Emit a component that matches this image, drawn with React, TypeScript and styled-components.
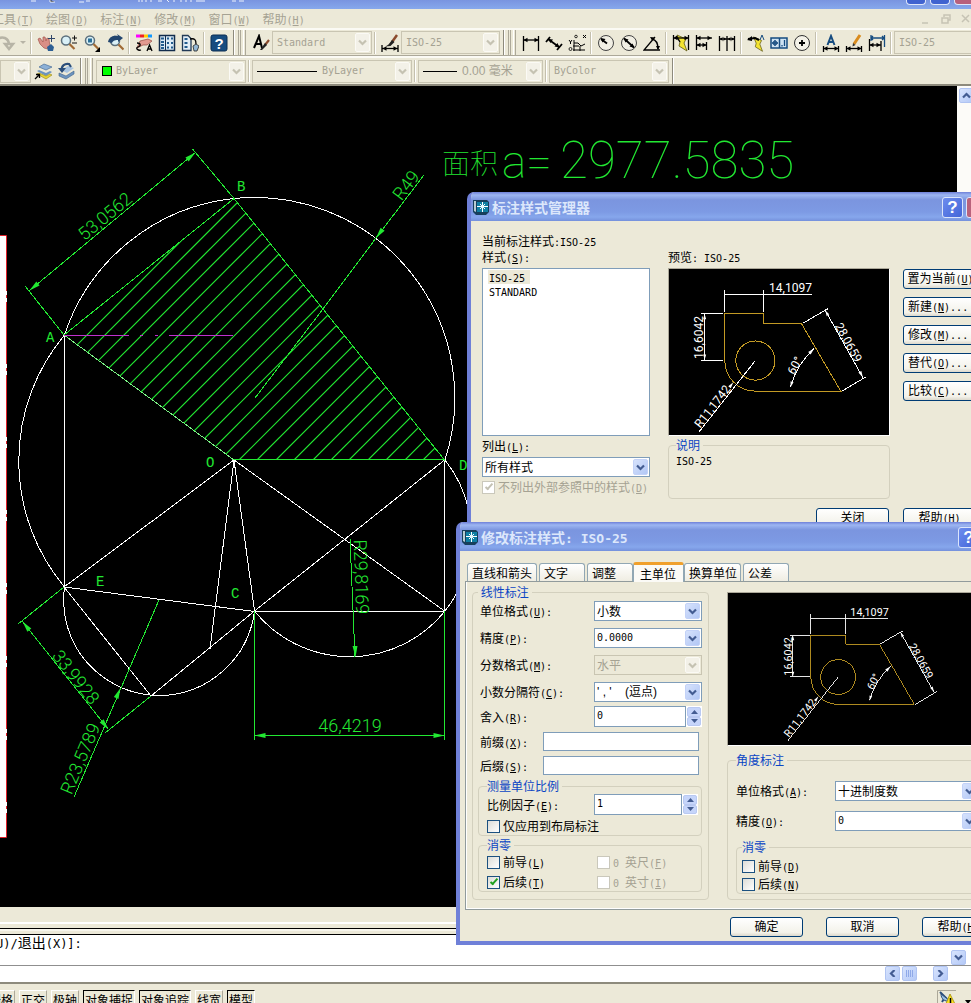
import React from "react";
import styled, { createGlobalStyle, css } from "styled-components";

const FACE = "#ece9d8";
const CJK = '"Noto Sans CJK SC", sans-serif';
const MONO = '"DejaVu Sans Mono", "Noto Sans CJK SC", monospace';
const GREEN = "#22e832";

const Global = createGlobalStyle`
  *, *::before, *::after { box-sizing: border-box; }
  body { margin: 0; overflow: hidden; background: ${FACE}; }
  button, input, select { font: inherit; color: inherit; margin: 0; padding: 0; border-radius: 0; }
`;

const Desktop = styled.div`
  position: relative;
  display: flex;
  flex-direction: column;
  height: 100vh;
  overflow: hidden;
  background: ${FACE};
  color: #000;
  font: 12px/14px ${CJK};
`;

/* ---------- mixed Chinese / half-width text ---------- */

const Half = styled.span<{ $size: number }>`
  font-family: ${MONO};
  font-size: ${(p) => p.$size}px;
  line-height: 1px;
  white-space: pre;
`;

function Txt({ text, size = 10 }: { text: string; size?: number }) {
  return (
    <>
      {text.split(/([ -~]+)/).map((part, i) => {
        if (i % 2 === 0) return part;
        const k = part.indexOf("&");
        return (
          <Half key={i} $size={size}>
            {k < 0 ? part : (
              <>
                {part.slice(0, k)}
                <u>{part[k + 1]}</u>
                {part.slice(k + 2)}
              </>
            )}
          </Half>
        );
      })}
    </>
  );
}

/* ---------- application frame ---------- */

const AppTitle = styled.header`
  flex: none;
  display: flex;
  justify-content: space-between;
  height: 9px;
  overflow: hidden;
  background: linear-gradient(#7994e0, #86a8ec);
`;
const CaptionButtons = styled.div`
  display: flex;
  gap: 4px;
  margin-right: -3px;
`;
const CaptionSliver = styled.button<{ $close?: boolean }>`
  width: 20px;
  height: 5px;
  border: 1px solid #dfe7fa;
  border-top: 0;
  border-radius: 0 0 4px 4px;
  background: ${(p) => (p.$close ? "#b8607c" : "#4063d0")};
`;
const MenuBar = styled.nav`
  flex: none;
  display: flex;
  align-items: center;
  height: 19px;
  overflow: hidden;
  color: #a5a293;
`;
const MenuList = styled.div`
  display: flex;
  flex: 1;
  gap: 12px;
  margin-left: -8px;
`;
const MenuItem = styled.button`
  border: 0;
  background: none;
  white-space: nowrap;
`;
const MdiButtons = styled.div`
  display: flex;
  gap: 2px;
  margin-right: -4px;
`;
const PlainButton = styled.button`
  display: grid;
  place-items: center;
  width: 18px;
  height: 16px;
  border: 0;
  background: none;
`;

const ToolRow = styled.div<{ $last?: boolean }>`
  flex: none;
  display: flex;
  align-items: stretch;
  height: ${(p) => (p.$last ? 30 : 28)}px;
  overflow: hidden;
  border-top: 2px solid #fbfaf4;
  border-bottom: ${(p) => (p.$last ? "2px solid #8d8a7c" : "1px solid #aca899")};
`;
const ToolGroup = styled.div`
  flex: none;
  display: flex;
  align-items: center;
  padding-right: 3px;
  border-right: 1px solid #8d8a7c;
  box-shadow: 1px 0 0 #fff;
  color: #a5a293;
`;
const Grip = styled.span`
  flex: none;
  width: 8px;
  margin: 0 3px 0 4px;
  border: solid;
  border-width: 0 1px;
  border-color: #fff #aca899;
  background: linear-gradient(90deg, ${FACE} 1px, #aca899 1px 2px, ${FACE} 2px 4px, #fff 4px 5px, ${FACE} 5px);
`;
const Sep = styled.span`
  flex: none;
  width: 6px;
  height: 22px;
  background: linear-gradient(90deg, transparent 2px, #c4c0ae 2px 3px, #fff 3px 4px, transparent 4px);
`;
const ToolButton = styled.button<{ $w?: number }>`
  flex: none;
  display: grid;
  place-items: center;
  width: ${(p) => p.$w ?? 23}px;
  height: 22px;
  border: 0;
  background: none;
  overflow: hidden;
`;

/* ---------- form controls ---------- */

const ComboBox = styled.span<{ $w?: number; $flat?: boolean; $off?: boolean }>`
  flex: ${(p) => (p.$w ? "none" : 1)};
  display: flex;
  align-items: center;
  width: ${(p) => (p.$w ? p.$w + "px" : "auto")};
  height: ${(p) => (p.$flat ? 23 : 20)}px;
  padding: 1px 1px 1px ${(p) => (p.$flat ? 4 : 2)}px;
  border: 1px solid ${(p) => (p.$flat || p.$off ? "#c9c5b2" : "#7f9db9")};
  background: ${(p) => (p.$flat || p.$off ? FACE : "#fff")};
  color: ${(p) => (p.$flat || p.$off ? "#a5a293" : "#000")};
`;
const Select = styled.select<{ $ascii?: boolean; $serif?: boolean }>`
  flex: 1;
  min-width: 0;
  appearance: none;
  border: 0;
  outline: 0;
  background: transparent;
  opacity: 1;
  color: inherit;
  font-family: ${(p) => (p.$ascii ? MONO : p.$serif ? '"Liberation Sans", ' + CJK : CJK)};
  font-size: ${(p) => (p.$ascii ? 10 : 12)}px;
  line-height: 16px;
`;
const DropMark = styled.span<{ $off?: boolean }>`
  flex: none;
  display: grid;
  place-items: center;
  align-self: stretch;
  width: 15px;
  border-radius: 2px;
  background: ${(p) => (p.$off ? "#f3f1e8" : "linear-gradient(135deg, #d6e2fc, #b2c7f5)")};
  border: 1px solid ${(p) => (p.$off ? "#fbfaf5" : "#c3d2f8")};
`;
function Chevron({ off, dir = 0 }: { off?: boolean; dir?: number }) {
  return (
    <svg width="9" height="7" viewBox="0 0 9 7" aria-hidden="true">
      <path d="M1 1.5 L4.5 5 L8 1.5" fill="none" stroke={off ? "#c5c2b2" : "#435c92"} strokeWidth="2.2" transform={`rotate(${dir} 4.5 3.5)`} />
    </svg>
  );
}
type ComboProps = {
  label: string; value: string; w?: number; flat?: boolean; off?: boolean; ascii?: boolean; serif?: boolean; id?: string; children?: React.ReactNode;
};
function Combo({ label, value, w, flat, off, ascii, serif, id, children }: ComboProps) {
  return (
    <ComboBox $w={w} $flat={flat} $off={off}>
      {children}
      <Select id={id} aria-label={label} disabled={off} $ascii={ascii} $serif={serif}>
        <option>{value}</option>
      </Select>
      <DropMark $off={flat || off}><Chevron off={flat || off} /></DropMark>
    </ComboBox>
  );
}
const Swatch = styled.span`
  width: 10px;
  height: 10px;
  margin: 0 4px 0 1px;
  border: 1px solid #000;
  background: #0f0;
`;
const LineSample = styled.span<{ $w: number }>`
  width: ${(p) => p.$w}px;
  height: 1px;
  margin-right: 5px;
  background: #000;
`;
const TextInput = styled.input<{ $tall?: boolean }>`
  flex: 1;
  min-width: 0;
  height: ${(p) => (p.$tall ? 21 : 19)}px;
  padding: 0 2px 3px;
  border: 1px solid #7f9db9;
  outline: 0;
  background: #fff;
  font-family: ${MONO};
  font-size: 10px;
`;
const SpinBox = styled.span<{ $w: number }>`
  display: flex;
  width: ${(p) => p.$w}px;
`;
const SpinColumn = styled.span`
  display: flex;
  flex-direction: column;
  width: 16px;
  border: 1px solid #fff;
  background: #fff;
`;
const SpinButton = styled.button`
  flex: 1;
  display: grid;
  place-items: center;
  border: 1px solid #b9c9f2;
  border-radius: 2px;
  background: #c6d5fa;
  overflow: hidden;
`;
function Spin({ id, value, w }: { id: string; value: string; w: number }) {
  return (
    <SpinBox $w={w}>
      <TextInput id={id} defaultValue={value} $tall />
      <SpinColumn>
        {["M0 4 L3.5 0 L7 4Z", "M0 0 L3.5 4 L7 0Z"].map((d, i) => (
          <SpinButton key={d} aria-label={i ? "减" : "加"}>
            <svg width="7" height="4" viewBox="0 0 7 4"><path d={d} fill="#435c92" /></svg>
          </SpinButton>
        ))}
      </SpinColumn>
    </SpinBox>
  );
}
const CheckLabel = styled.label<{ $off?: boolean }>`
  display: flex;
  align-items: center;
  gap: 3px;
  height: 14px;
  white-space: nowrap;
  color: ${(p) => (p.$off ? "#a5a293" : "#000")};
`;
const CheckInput = styled.input`
  appearance: none;
  flex: none;
  display: grid;
  place-items: center;
  width: 13px;
  height: 13px;
  border: 1px solid #1c5180;
  background: linear-gradient(135deg, #dcdcd7, #fff);
  &:disabled { border-color: #cac8bb; background: #fff; }
  &:checked::after {
    content: "";
    width: 4px;
    height: 8px;
    margin-top: -3px;
    border: solid #21a121;
    border-width: 0 2px 2px 0;
    transform: rotate(42deg);
  }
  &:disabled:checked::after { border-color: #c3c1b3; }
`;
function Check({ text, off, on }: { text: string; off?: boolean; on?: boolean }) {
  return (
    <CheckLabel $off={off}>
      <CheckInput type="checkbox" disabled={off} defaultChecked={on} />
      <span><Txt text={text} /></span>
    </CheckLabel>
  );
}
const PushButton = styled.button<{ $w?: number; $left?: boolean }>`
  flex: none;
  width: ${(p) => p.$w ?? 73}px;
  height: 20px;
  padding: 0 ${(p) => (p.$left ? 4 : 0)}px 2px;
  border: 1px solid #003c74;
  border-radius: 3px;
  background: linear-gradient(#fff, #f3f2ea 80%, #dcd8cc);
  line-height: 16px;
  text-align: ${(p) => (p.$left ? "left" : "center")};
  white-space: nowrap;
`;
const Group = styled.fieldset<{ $pad: string }>`
  min-width: 0;
  margin: 0;
  padding: ${(p) => p.$pad};
  border: 1px solid #d3d0be;
  border-radius: 4px;
  > legend {
    margin-left: 0;
    padding: 0 3px 0 0;
    color: #0a45c4;
    line-height: 14px;
  }
`;
const Stack = styled.div<{ $gap: number; $top?: number; $left?: number }>`
  display: flex;
  flex-direction: column;
  gap: ${(p) => p.$gap}px;
  margin-top: ${(p) => p.$top ?? 0}px;
  padding-left: ${(p) => p.$left ?? 0}px;
`;
const Row = styled.div<{ $label: number; $right?: number }>`
  display: flex;
  align-items: center;
  padding-right: ${(p) => p.$right ?? 0}px;
  > label:first-child {
    flex: none;
    width: ${(p) => p.$label}px;
    white-space: nowrap;
  }
`;

/* ---------- dialogs ---------- */

const Dialog = styled.section<{ $x: number; $y: number; $w: number }>`
  position: absolute;
  left: ${(p) => p.$x}px;
  top: ${(p) => p.$y}px;
  width: ${(p) => p.$w}px;
  border: solid #6f80d8;
  border-width: 0 4px 4px;
  border-radius: 7px 7px 0 0;
  background: ${FACE};
  overflow: hidden;
`;
const DialogTitle = styled.header`
  display: flex;
  align-items: center;
  gap: 3px;
  height: 29px;
  padding: 1px 0 0 2px;
  background: linear-gradient(#6f80d8, #9db6f2 3px, #7b95df 8px, #7d9ae4 20px, #86a7ec 25px, #7591dc);
  box-shadow: -4px 0 #7b95df, 4px 0 #7b95df;
  color: #dce7fb;
  h2 { flex: 1; margin: 0; font-size: 14px; line-height: 18px; font-weight: 700; }
`;
const TitleButton = styled.button<{ $close?: boolean }>`
  width: 21px;
  height: 21px;
  border: 1px solid #dbe5fb;
  border-radius: 3px;
  background: ${(p) => (p.$close ? "#b9627c" : "linear-gradient(135deg, #6d8cee, #4265d8)")};
  color: #fff;
  font: 700 17px/17px "Liberation Sans", sans-serif;
`;
function Window({ x, y, w, title, children }: { x: number; y: number; w: number; title: string; children: React.ReactNode }) {
  return (
    <Dialog $x={x} $y={y} $w={w}>
      <DialogTitle>
        <svg width="16" height="16" viewBox="0 0 16 16" aria-hidden="true">
          <path d="M0 1 H14 L16 3 V13 L13 16 H3 L0 13Z" fill="#173f5c" />
          <path d="M1 2 H3 V13 L1 12Z" fill="#b9cdd2" />
          <rect x="4" y="3" width="11" height="10" fill="#0f7fa3" />
          <path d="M9.500 3V6M9.500 9V13M4 7.500H8M11 7.500H15M7 5L8.500 6.500M12 5L10.500 6.500M7 10L8.500 8.500M12 10L10.500 8.500" stroke="#fff" />
          <rect x="8" y="6" width="3" height="3" fill="#e9fbff" />
        </svg>
        <h2><Txt text={title} size={13} /></h2>
        <TitleButton aria-label="帮助">?</TitleButton>
        <TitleButton aria-label="关闭" $close>×</TitleButton>
      </DialogTitle>
      {children}
    </Dialog>
  );
}

const ManagerBody = styled.div`
  padding: 12px 9px 6px 11px;
  line-height: 16px;
`;
const ManagerColumns = styled.div`
  display: grid;
  grid-template-columns: 168px 222px 75px;
  column-gap: 18px;
  > :last-child { margin-left: -5px; }
`;
const StyleList = styled.ul`
  height: 168px;
  margin: 3px 0 2px;
  padding: 1px 5px;
  border: 1px solid #7f9db9;
  background: #fff;
  list-style: none;
  line-height: 14px;
`;
const StyleItem = styled.li<{ $on?: boolean }>`
  width: max-content;
  height: 14px;
  padding: 0 5px 0 1px;
  background: ${(p) => (p.$on ? FACE : "none")};
  line-height: 13px;
`;
const Footer = styled.footer<{ $gap: number; $pad: string }>`
  display: flex;
  justify-content: flex-end;
  gap: ${(p) => p.$gap}px;
  padding: ${(p) => p.$pad};
`;
const PreviewFrame = styled.div<{ $h: number; $top: number; $bottom: number }>`
  height: ${(p) => p.$h}px;
  margin: ${(p) => p.$top}px 0 ${(p) => p.$bottom}px;
  border: 1px solid #aca899;
  border-right-color: #fff;
  border-bottom-color: #fff;
  background: #000;
  svg { display: block; width: 100%; height: 100%; }
`;

function Preview({ box }: { box: string }) {
  return (
    <svg viewBox={box} fill="none" stroke="#fff" strokeWidth="1" aria-label="标注预览">
      <g stroke="#c39a24" shapeRendering="crispEdges">
        <path d="M55.500 44.500H94.500V54.500H132L171 121.500H86A30.500 30.500 0 0 1 55.500 91Z" />
        <circle cx="86" cy="91" r="19.500" />
      </g>
      <g shapeRendering="crispEdges">
        <path d="M55.500 21V43M94.500 21V43M55.500 25.500H142M32 44.500H54M32 90.500H54M35.500 45V90" />
        <path d="M133 54L158 39.500M172 121.500L196.500 107M155.500 41L193 108M86 91L29.500 162.500M144.500 79Q127 95 121 117" />
      </g>
      <g fill="#fff" stroke="none" fontFamily="Roboto, sans-serif" fontSize="12">
        <text x="121" y="23" textAnchor="middle">14,1097</text>
        <text transform="translate(34 68) rotate(-90)" textAnchor="middle">16,6042</text>
        <text transform="translate(175 75) rotate(61)" textAnchor="middle">28,0659</text>
        <text transform="translate(129 98) rotate(-62)" textAnchor="middle">60°</text>
        <text transform="translate(31 159) rotate(-52)">R11,1742</text>
        <path d="M144.500 79l-6 3.500 2.500 2.500zM121 117.500l0-6 3 1zM155.500 41l1.500 6 2.500-2zM193 108l-4.500-5 3-1.500zM64 112.500l-5 4 2.500 2zM34 50l1.500-5 1.500 5zM34 85l1.500 5 1.500-5z" />
      </g>
    </svg>
  );
}

function StyleManager() {
  return (
    <Window x={467} y={192} w={524} title="标注样式管理器">
      <ManagerBody>
        <div><Txt text="当前标注样式:ISO-25" /></div>
        <ManagerColumns>
          <div>
            <div><Txt text="样式(&S):" /></div>
            <StyleList>
              <StyleItem $on><Txt text="ISO-25" /></StyleItem>
              <StyleItem><Txt text="STANDARD" /></StyleItem>
            </StyleList>
            <label htmlFor="list-filter"><Txt text="列出(&L):" /></label>
            <Stack $gap={3} $top={3}>
              <Row $label={0}><Combo id="list-filter" label="列出" value="所有样式" /></Row>
              <Check text="不列出外部参照中的样式(&D)" off on />
            </Stack>
          </div>
          <div>
            <div><Txt text="预览: ISO-25" /></div>
            <PreviewFrame $h={168} $top={3} $bottom={2}><Preview box="0 0 219 165" /></PreviewFrame>
            <Group $pad="0 7px 30px">
              <legend>说明</legend>
              <Txt text="ISO-25" />
            </Group>
          </div>
          <Stack $gap={8} $top={20}>
            {["置为当前(&U)", "新建(&N)...", "修改(&M)...", "替代(&O)...", "比较(&C)..."].map((t, i) => (
              <PushButton key={t} $w={75} $left={i > 0}><Txt text={t} /></PushButton>
            ))}
          </Stack>
        </ManagerColumns>
        <Footer $gap={14} $pad="9px 2px 0 0">
          <PushButton>关闭</PushButton>
          <PushButton><Txt text="帮助(&H)" /></PushButton>
        </Footer>
      </ManagerBody>
    </Window>
  );
}

const TabList = styled.div`
  display: flex;
  align-items: flex-end;
  gap: 2px;
  height: 30px;
  padding-left: 7px;
`;
const Tab = styled.button<{ $w: number; $on?: boolean }>`
  width: ${(p) => p.$w}px;
  height: 18px;
  padding: 0 0 0 4px;
  border: 1px solid #91a7b4;
  border-bottom: 0;
  border-radius: 3px 3px 0 0;
  background: linear-gradient(#fff, #efede2);
  text-align: left;
  white-space: nowrap;
  line-height: 17px;
  ${(p) => p.$on && css`
    height: 20px;
    margin: 0 -2px -1px;
    padding-left: 6px;
    border-top: 3px solid #f0a02c;
    background: #fbfaf6;
    line-height: 14px;
  `}
`;
const Panel = styled.div`
  display: grid;
  grid-template-columns: 237px 1fr;
  gap: 18px;
  margin: 0 5px;
  padding: 3px 10px 9px 6px;
  border: 1px solid #919b9c;
  box-shadow: inset 1px 0 #fff, inset 0 -1px #fff;
`;
const CheckPair = styled.div`
  display: grid;
  grid-template-columns: 110px 1fr;
  row-gap: 6px;
`;

function ModifyStyle() {
  return (
    <Window x={456} y={522} w={551} title="修改标注样式: ISO-25">
      <TabList role="tablist">
        <Tab $w={70}>直线和箭头</Tab>
        <Tab $w={46}>文字</Tab>
        <Tab $w={46}>调整</Tab>
        <Tab $w={51} $on>主单位</Tab>
        <Tab $w={57}>换算单位</Tab>
        <Tab $w={46}>公差</Tab>
      </TabList>
      <Panel>
        <Group $pad="2px 6px 5px 5px">
          <legend>&nbsp;线性标注</legend>
          <Stack $gap={7} $left={2}>
            <Row $label={114}><label htmlFor="u1"><Txt text="单位格式(&U):" /></label><Combo id="u1" label="单位格式" value="小数" /></Row>
            <Row $label={114}><label htmlFor="u2"><Txt text="精度(&P):" /></label><Combo id="u2" label="精度" value="0.0000" ascii /></Row>
            <Row $label={114}><label htmlFor="u3"><Txt text="分数格式(&M):" /></label><Combo id="u3" label="分数格式" value="水平" off /></Row>
            <Row $label={114}><label htmlFor="u4"><Txt text="小数分隔符(&C):" /></label><Combo id="u4" label="小数分隔符" value={"' , ' \u00a0\u00a0\u00a0(逗点)"} serif /></Row>
          </Stack>
          <Stack $gap={5} $top={4} $left={2}>
            <Row $label={114}><label htmlFor="u5"><Txt text="舍入(&R):" /></label><Spin id="u5" value="0" w={108} /></Row>
            <Row $label={63} $right={3}><label htmlFor="u6"><Txt text="前缀(&X):" /></label><TextInput id="u6" /></Row>
            <Row $label={63} $right={3}><label htmlFor="u7"><Txt text="后缀(&S):" /></label><TextInput id="u7" /></Row>
          </Stack>
          <Stack $gap={2} $top={4}>
            <Group $pad="1px 4px 2px 8px">
              <legend>测量单位比例</legend>
              <Stack $gap={4}>
                <Row $label={107}><label htmlFor="u8"><Txt text="比例因子(&E):" /></label><Spin id="u8" value="1" w={104} /></Row>
                <Check text="仅应用到布局标注" />
              </Stack>
            </Group>
            <Group $pad="3px 4px 2px 8px">
              <legend>消零</legend>
              <CheckPair>
                <Check text="前导(&L)" />
                <Check text="0 英尺(&F)" off />
                <Check text="后续(&T)" on />
                <Check text="0 英寸(&I)" off />
              </CheckPair>
            </Group>
          </Stack>
        </Group>
        <div>
          <PreviewFrame $h={154} $top={7} $bottom={7}><Preview box="-37 -2 288 168" /></PreviewFrame>
          <Group $pad="14px 7px 5px 8px">
            <legend>角度标注</legend>
            <Stack $gap={10}>
              <Row $label={99}><label htmlFor="a1"><Txt text="单位格式(&A):" /></label><Combo id="a1" label="角度单位格式" value="十进制度数" /></Row>
              <Row $label={99}><label htmlFor="a2"><Txt text="精度(&O):" /></label><Combo id="a2" label="角度精度" value="0" ascii /></Row>
            </Stack>
            <Stack $gap={0} $top={9}>
              <Group $pad="5px 5px 2px">
                <legend>消零</legend>
                <Stack $gap={4}>
                  <Check text="前导(&D)" />
                  <Check text="后续(&N)" />
                </Stack>
              </Group>
            </Stack>
          </Group>
        </div>
      </Panel>
      <Footer $gap={23} $pad="7px 8px 4px">
        <PushButton>确定</PushButton>
        <PushButton>取消</PushButton>
        <PushButton><Txt text="帮助(&H)" /></PushButton>
      </Footer>
    </Window>
  );
}

/* ---------- toolbar icons, 18 × 18 ---------- */

const K = { stroke: "#000", strokeWidth: 1.3, fill: "none" };
const lens = (x: number, y: number) => (
  <>
    <circle cx={x} cy={y} r="4.500" fill="#d9f0f7" stroke="#5b6f7c" strokeWidth="1.500" />
    <path d={`M${x + 3.5} ${y + 3.5}l5 5`} stroke="#a06a35" strokeWidth="2.200" />
  </>
);
const brush = (
  <>
    <path d="M16 1L11 8" stroke="#8b4a2c" strokeWidth="2.500" />
    <path d="M11 6l2.500 2-4 4-5 .5 3-2z" fill="#222" />
  </>
);
const hBar = (y: number, x1 = 1, x2 = 17) => (
  <>
    <path d={`M${x1} ${y}H${x2}`} {...K} />
    <path d={`M${x1 + 0.5} ${y}l4-2.200v4.400zM${x2 - 0.5} ${y}l-4-2.200v4.400z`} fill="#000" />
  </>
);
const bolt = <path d="M5 1l9 4-2 4 3 8-8-5 1-4z" fill="#f3e331" stroke="#5c5715" strokeWidth=".8" />;

const icons: Record<string, React.ReactNode> = {
  redo: <path d="M1 6C6 1 13 4 13 11M9 10l4 5 4-5z" stroke="#b7b4a6" strokeWidth="2.500" fill="none" />,
  pan: (
    <>
      <path d="M1 5l2-1 3 4 0-5 2 0 1 4 1-3 2 1 1 8-2 2-4-1-4-4z" fill="#d98f86" stroke="#a3564e" strokeWidth=".7" />
      <path d="M10 13l4-3 3 3-1 4h-5z" fill="#2d5f94" />
      <path d="M14.500 1v7M11 4.500h7" stroke="#30466a" />
    </>
  ),
  zoomRt: <>{lens(6, 6.5)}<path d="M12 4h5M14.500 1.500v5M12 9h5" stroke="#111" /></>,
  zoomWin: <>{lens(7, 6.5)}<rect x="5" y="4.500" width="4" height="4" fill="#2c7098" /><path d="M17 13v5h-5z" /></>,
  zoomPrev: <>{lens(9, 7)}<path d="M2 8c1-5 5-7 10-6l-1-2 6 4-5 4v-2c-4 0-5 1-6 3z" fill="#23466f" /></>,
  props: (
    <>
      <path d="M1 2h4" stroke="#f0f" strokeWidth="3" /><path d="M5 2h4" stroke="#e22" strokeWidth="3" />
      <path d="M9 2h4" stroke="#fc0" strokeWidth="3" /><path d="M13 2h4" stroke="#19f" strokeWidth="3" />
      <path d="M5 7l8-2 4 2-5 4-4 0-6 3z" fill="#e39a90" stroke="#93493f" strokeWidth=".7" />
      <path d="M2 9c4 0 4 3 1 4s0 4 3 3M12 17l2.500-6 2.500 6M13 15h3" {...K} />
    </>
  ),
  center: (
    <>
      <rect x="1.500" y="1.500" width="15" height="15" fill="#dcebf6" stroke="#122c4c" strokeWidth="1.500" />
      <path d="M7.500 2v14" stroke="#122c4c" />
      <path d="M3 4.500h3M3 8h3M3 11h3M3 14h3M9 4.500h2M13 4.500h2M9 9h2M13 9h2M9 13.500h2M13 13.500h2" stroke="#235c8e" strokeWidth="2" />
    </>
  ),
  palette: (
    <>
      <path d="M1.500 1.500H7l3 3v12H1.500z" fill="#e2edf6" stroke="#223a56" strokeWidth="1.300" />
      <path d="M3.500 5h3M3.500 9h3M3.500 13h3" stroke="#235c8e" strokeWidth="2" />
      <path d="M9 5c5-1 6 1 6 5" {...K} /><path d="M12 12l3-2 3 2-2 5h-3z" fill="#94b7d4" stroke="#222" strokeWidth=".8" />
    </>
  ),
  help: (
    <>
      <rect x="1" y="1" width="16" height="16" rx="2" fill="#164c80" stroke="#0a2c52" />
      <text x="9" y="15" textAnchor="middle" fill="#fff" fontFamily="Liberation Sans" fontWeight="700" fontSize="15">?</text>
    </>
  ),
  textStyle: <><path d="M2 14L7 2l3 12M4 10h5" stroke="#000" strokeWidth="2" fill="none" /><path d="M17 6l-4 5" stroke="#8b4a2c" strokeWidth="2.200" /><path d="M13 9l2 2-5 5-2 0z" fill="#222" /></>,
  dimStyle: <>{brush}{hBar(14.5)}<path d="M1 11v7M17 11v7" {...K} /></>,
  linear: <>{hBar(6)}<path d="M1.500 2v15M16.500 2v15" {...K} /></>,
  aligned: <><path d="M3 5l11 8M1 8l4-5M12 16l5-6" {...K} strokeWidth="1.800" /><path d="M3 5l5 .5-2.500 3.500zM14.500 13.500l-5-1 3-3.500z" /></>,
  ordinate: <><path d="M6 6v11M5 12h6M5 16h12M12 12v5M6 9l4 0 3 3 4-2M15 1l3 3M18 1l-3 3M1 6l1.500 2 1.500-2M2.500 8v2" {...K} strokeWidth="1" /><circle cx="8" cy="2.500" r="1.300" {...K} strokeWidth=".8" /><circle cx="2.500" cy="15" r="1.500" {...K} strokeWidth=".8" /></>,
  radius: <><circle cx="9" cy="9" r="7.500" fill="#f1efe4" stroke="#444" /><path d="M4 5l6 4.500" {...K} strokeWidth="1.800" /><path d="M3.500 4l5 1-3 3.500z" /></>,
  diameter: <><circle cx="9" cy="9" r="7.500" fill="#f1efe4" stroke="#444" /><path d="M4 4.500l10 9" {...K} strokeWidth="1.800" /><path d="M3.500 4l5 1.500-3 3zM14.500 14l-5-1.500 3-3z" /></>,
  angular: <><path d="M17 16H1L12 3M9 5c5 1 6 5 6 10" {...K} /><path d="M7 3l5 .5-3 3zM15 16l-2-4h4z" /></>,
  quick: <>{bolt}{hBar(4)}<path d="M1.500 1v15M16.500 1v15M4 2l4 6" {...K} /></>,
  baseline: <>{hBar(4)}{hBar(11, 1, 12)}<path d="M1.500 1v15M11.500 8v8" {...K} /></>,
  cont: <>{hBar(5, 1, 9)}{hBar(5, 9, 17)}<path d="M1.500 2v15M9 2v15M16.500 2v15" {...K} /></>,
  leader: <><g transform="translate(2 2) scale(.9)">{bolt}</g><path d="M1 5l7-1 4 2" {...K} strokeWidth="2" /><path d="M0 6l5-4v5z" /><path d="M13 6l2-5 2 5" stroke="#164c80" fill="none" /></>,
  tolerance: <><path d="M1 4h16v10H1zM9.500 4v10" fill="#cfe3f2" stroke="#164c80" strokeWidth="1.500" /><circle cx="5" cy="9" r="2" stroke="#164c80" fill="none" /><path d="M5 6v6M2 9h6M12 11v1.500M14.500 6v6" stroke="#164c80" strokeWidth="1.300" /></>,
  mark: <><circle cx="9" cy="9" r="7.500" fill="#f4f2e8" stroke="#333" /><path d="M9 6v6M6 9h6" {...K} strokeWidth="1.800" /></>,
  dimText: <>{hBar(14.5)}<path d="M1.500 12v6M16.500 12v6" {...K} /><path d="M5.500 11L9 2l3.500 9M6.500 8h5" stroke="#164c80" strokeWidth="2" fill="none" /></>,
  dimEdit: <>{hBar(14.5)}<path d="M1.500 12v6M16.500 12v6" {...K} /><path d="M15 1L9 10" stroke="#d98c1f" strokeWidth="3" /><path d="M8 9l2.500 2-3 1.500z" fill="#333" /></>,
  dimUpdate: <>{hBar(11, 1, 13)}<path d="M1.500 5v12M13 7v10" {...K} /><path d="M3 4h13M16.500 1v12M3 1v6M5 2L3 4l2 2M14 2l2 2-2 2" stroke="#164c80" strokeWidth="1.300" fill="none" /></>,
  layers: <><path d="M5 5l5-3 8 3-6 3z" fill="#8cb0d6" stroke="#4a6f9a" strokeWidth=".7" /><path d="M3 9l2-1 7 3 4-2 2 1-6 4z" fill="#6d94bf" /><path d="M3 12l2-1 7 3 4-2 2 1-6 4z" fill="#e8d433" stroke="#94871c" strokeWidth=".6" /><path d="M1 17l4-4M2 12.500h3.500V16" {...K} /></>,
  layerPrev: <><path d="M2 11l7 3 8-5v3l-8 5-7-3z" fill="#6d94bf" stroke="#3e638c" strokeWidth=".6" /><path d="M4 8l6 3 7-5-6-2z" fill="#a9c4e0" /><path d="M5 8C4 4 8 1 12 2l2 3" stroke="#2c4f7b" strokeWidth="2.200" fill="none" /><path d="M1 6l4 5 4-5z" fill="#2c4f7b" /></>,
};

function Tool({ name, label }: { name: string; label: string }) {
  return (
    <ToolButton aria-label={label} $w={name === "redo" ? 17 : 23}>
      <svg width="18" height="18" viewBox={name === "redo" ? "4 0 18 18" : "0 0 18 18"} aria-hidden="true">{icons[name]}</svg>
    </ToolButton>
  );
}
const Tools = ({ items }: { items: [string, string][] }) => <>{items.map(([n, l]) => <Tool key={n} name={n} label={l} />)}</>;

/* ---------- drawing area ---------- */

const Workspace = styled.main`
  flex: 1;
  min-height: 0;
  display: flex;
  overflow: hidden;
  background: #000;
`;
const CanvasWrap = styled.div`
  flex: 1;
  min-width: 0;
  overflow: hidden;
  svg { display: block; }
`;
const VScroll = styled.div`
  flex: none;
  width: 14px;
  padding: 2px 0 0 2px;
  background: #fcfbf8;
`;
const ScrollButton = styled.button`
  display: grid;
  place-items: center;
  width: 15px;
  height: 15px;
  border: 1px solid #b0c4f2;
  border-radius: 2px;
  background: linear-gradient(135deg, #d8e4fd, #b4c9f7);
`;

/* Arrowhead whose tip sits at x,y and which points along angle a (degrees). */
const Arrow = ({ x, y, a }: { x: number; y: number; a: number }) => (
  <path d="M0 0L-11 -2.500V2.500Z" fill={GREEN} stroke="none" transform={`translate(${x} ${y}) rotate(${a})`} />
);

function Canvas() {
  const hatch = Array.from({ length: 27 }, (_, i) => Math.round(422 + i * 18.45));
  return (
    <svg width="957" height="821" viewBox="0 86 957 821" fill="none" aria-label="图形窗口">
      <clipPath id="sector"><path d="M64 335L234 198.500L445 460H234Z" /></clipPath>
      <rect x="-2" y="236" width="9" height="601" fill="#fff" />
      <path d="M0 235.500H6.500V837.500H0" stroke="#e0202a" strokeDasharray="62 4 3 4" />
      <g stroke="#fff" shapeRendering="crispEdges">
        <path d="M64.500 335A200.500 200.500 0 0 1 234 198.500A200.500 200.500 0 0 1 445 460" />
        <path d="M64.500 335A196.500 196.500 0 0 0 64.500 587" />
        <path d="M64.500 335V587Q62 608 67.500 627A96.500 96.500 0 0 0 159.500 695.500A96.500 96.500 0 0 0 254.500 611" />
        <path d="M254.500 611A122 122 0 0 0 445 611A122 122 0 0 0 445 460" />
        <path d="M234 460L64 587L254.500 611.500H444.500V460L254.500 611L151 696L64 587" />
        <path d="M64 335L234 460L444.500 611M234 460L254.500 611M234 460L210 649" />
      </g>
      <g stroke={GREEN}>
        <g clipPath="url(#sector)" strokeWidth="1.2">
          {hatch.map((c) => <path key={c} d={`M${c - 470} 470L${c - 190} 190`} />)}
        </g>
      </g>
      <g stroke={GREEN} shapeRendering="crispEdges">
        <path d="M64 335L234 198.500L445 460.500M234 459.500H445" />
        <path d="M64 335L234 460" strokeOpacity=".6" />
        <path d="M64 335L25 286M234 198.500L192.500 149M29.500 290.500L195.500 152.500" />
        <path d="M255 398L326 305L376 238L424 175" />
        <path d="M64 587L18 624M151 696L105 733M22.500 621.500L108.500 729.500" />
        <path d="M159 600L74 797M350 539L355 657" />
        <path d="M254.500 611V740M444.500 611V740M254.500 735.500H444.500" />
      </g>
      <path d="M64 335.500H129M140 335.500h3M155 335.500h3M169 335.500H233" stroke="#c030ce" shapeRendering="crispEdges" />
      <Arrow x={195.500} y={152.500} a={-39.7} /><Arrow x={29.500} y={290.500} a={140.3} />
      <Arrow x={376} y={238} a={127} /><Arrow x={22.500} y={621.500} a={231.5} />
      <Arrow x={108.500} y={729.500} a={51.5} /><Arrow x={120.500} y={688} a={-66.7} />
      <Arrow x={355.500} y={657} a={87.5} /><Arrow x={254.500} y={735.500} a={180} /><Arrow x={444.500} y={735.500} a={0} />
      <g fill={GREEN} fontFamily="Roboto, sans-serif" fontSize="18" fontWeight="300" textAnchor="middle">
        <text transform="translate(109 221) rotate(-39.7)">53,0562</text>
        <text transform="translate(411 189) rotate(-53)">R49</text>
        <text transform="translate(71 681) rotate(51.5)">33,9928</text>
        <text transform="translate(86 761) rotate(-67)">R23,5789</text>
        <text transform="translate(355 577) rotate(88)">R29,8169</text>
        <text x="350" y="732">46,4219</text>
      </g>
      <g fill={GREEN} fontWeight="100">
        <text x="442" y="174" fontFamily="Noto Sans CJK SC, sans-serif" fontSize="28">面积</text>
        <text x="502" y="178" fontFamily="Roboto, sans-serif" fontSize="46">a=</text>
        <text x="560" y="178" fontFamily="Roboto, sans-serif" fontSize="51">2977.5835</text>
      </g>
      <g fill={GREEN} fontFamily="Liberation Mono, monospace" fontSize="14">
        <text x="237" y="191">B</text>
        <text x="46" y="342">A</text>
        <text x="206" y="467">O</text>
        <text x="459" y="470">D</text>
        <text x="96" y="586">E</text>
        <text x="231" y="598">C</text>
      </g>
    </svg>
  );
}

/* ---------- command line and status bar ---------- */

const Splitter = styled.div`
  flex: none;
  height: 28px;
  background: linear-gradient(${FACE} 15px, #fff 15px 17px, ${FACE} 17px 21px, #000 21px 22px, #f7f5ec 22px 24px, ${FACE} 24px 27px, #000 27px);
`;
const Command = styled.div`
  flex: none;
  display: flex;
  align-items: flex-end;
  justify-content: space-between;
  height: 31px;
  padding-right: 5px;
  background: #fff;
  border-bottom: 1px solid #8f8f8f;
  font-size: 14px;
  line-height: 14px;
`;
const CommandText = styled.div`
  align-self: flex-start;
  margin-left: -4px;
  white-space: nowrap;
`;
const HScroll = styled.div`
  flex: none;
  display: flex;
  gap: 2px;
  justify-content: flex-end;
  height: 16px;
  padding-right: 23px;
  background: #fff;
  > :last-child { margin-left: 14px; }
`;
const StatusBar = styled.footer`
  flex: none;
  display: flex;
  gap: 4px;
  height: 21px;
  padding-top: 6px;
  border-top: 2px solid #8d8a7c;
  overflow: hidden;
`;
const StatusButton = styled.button<{ $on?: boolean; $first?: boolean }>`
  height: 18px;
  flex: none;
  padding: 0 1px;
  margin-left: ${(p) => (p.$first ? -13 : 0)}px;
  border: 1px solid;
  border-color: ${(p) => (p.$on ? "#000 #fff #fff #000" : "#fff #aca899 #aca899 #fff")};
  background: none;
  white-space: nowrap;
  line-height: 15px;
`;
const Tray = styled.div`
  flex: 1;
  display: flex;
  justify-content: flex-end;
  gap: 8px;
`;

export default function App() {
  return (
    <Desktop>
      <Global />
      <AppTitle>
        <svg width="260" height="5" viewBox="0 0 260 5" aria-hidden="true">
          <path d="M31 1h5M50 0v2h5M79 2h5M86 1h4M139 0v2M142 0v2M146 0v2M151 0v2M158 1h4M167 0l2 2M174 0v2M181 0v2M186 0v2M191 0v2M196 1h9M232 1h4M239 1h5" stroke="#eef3fd" />
        </svg>
        <CaptionButtons>
          <CaptionSliver aria-label="最小化" />
          <CaptionSliver aria-label="最大化" />
          <CaptionSliver aria-label="关闭" $close />
        </CaptionButtons>
      </AppTitle>
      <MenuBar>
        <MenuList>
          {["工具(&T)", "绘图(&D)", "标注(&N)", "修改(&M)", "窗口(&W)", "帮助(&H)"].map((t) => (
            <MenuItem key={t}><Txt text={t} /></MenuItem>
          ))}
        </MenuList>
        <MdiButtons>
          {["M1 9H7", "M3 3V1H9V6H7M1 4H7V9H1Z", "M1 1L8 8M8 1L1 8"].map((d, i) => (
            <PlainButton key={d} aria-label={["最小化", "还原", "关闭"][i]}>
              <svg width="10" height="10" viewBox="0 0 10 10"><path d={d} stroke="#c6c3b4" strokeWidth="1.500" fill="none" /></svg>
            </PlainButton>
          ))}
        </MdiButtons>
      </MenuBar>
      <ToolRow>
        <ToolGroup>
          <Tool name="redo" label="重做" />
          <ToolButton $w={11} aria-label="重做列表"><svg width="6" height="3" viewBox="0 0 6 3"><path d="M0 0H6L3 3Z" fill="#b7b4a6" /></svg></ToolButton>
          <Sep />
          <Tools items={[["pan", "平移"], ["zoomRt", "实时缩放"], ["zoomWin", "窗口缩放"], ["zoomPrev", "上一个"]]} />
          <Sep />
          <Tools items={[["props", "特性"], ["center", "设计中心"], ["palette", "工具选项板"]]} />
          <Sep />
          <Tool name="help" label="帮助" />
        </ToolGroup>
        <Grip />
        <ToolGroup>
          <Tool name="textStyle" label="文字样式" />
          <Combo label="文字样式" value="Standard" w={100} flat ascii />
          <Sep />
          <Tool name="dimStyle" label="标注样式" />
          <Combo label="标注样式" value="ISO-25" w={99} flat ascii />
        </ToolGroup>
        <Grip />
        <ToolGroup>
          <Tools items={[["linear", "线性"], ["aligned", "对齐"], ["ordinate", "坐标"]]} />
          <Sep />
          <Tools items={[["radius", "半径"], ["diameter", "直径"], ["angular", "角度"]]} />
          <Sep />
          <Tools items={[["quick", "快速标注"], ["baseline", "基线"], ["cont", "连续"]]} />
          <Sep />
          <Tools items={[["leader", "引线"], ["tolerance", "公差"], ["mark", "圆心标记"]]} />
          <Sep />
          <Tools items={[["dimText", "编辑标注"], ["dimEdit", "编辑标注文字"], ["dimUpdate", "标注更新"]]} />
          <Sep />
          <Combo label="标注样式控制" value="ISO-25" w={130} flat ascii />
        </ToolGroup>
      </ToolRow>
      <ToolRow $last>
        <ToolGroup>
          <Combo label="图层" value="" w={31} flat />
          <Tools items={[["layers", "图层"], ["layerPrev", "上一图层"]]} />
        </ToolGroup>
        <Grip />
        <ToolGroup>
          <Combo label="颜色" value="ByLayer" w={150} flat ascii><Swatch /></Combo>
          <Sep />
          <Combo label="线型" value="ByLayer" w={160} flat ascii><LineSample $w={60} /></Combo>
          <Sep />
          <Combo label="线宽" value="0.00 毫米" w={125} flat serif><LineSample $w={34} /></Combo>
          <Sep />
          <Combo label="打印样式" value="ByColor" w={120} flat ascii />
        </ToolGroup>
      </ToolRow>
      <Workspace>
        <CanvasWrap><Canvas /></CanvasWrap>
        <VScroll><ScrollButton aria-label="向上滚动"><Chevron dir={180} /></ScrollButton></VScroll>
      </Workspace>
      <Splitter />
      <Command>
        <CommandText><Txt text="U)/" size={12} />退出<Txt text="(X)]:" size={12} /></CommandText>
        <ScrollButton aria-label="向下滚动"><Chevron /></ScrollButton>
      </Command>
      <HScroll>
        <ScrollButton aria-label="向左滚动"><Chevron dir={90} /></ScrollButton>
        <ScrollButton aria-label="滑块"><svg width="7" height="7" viewBox="0 0 7 7"><path d="M.5 0V7M2.500 0V7M4.500 0V7M6.500 0V7" stroke="#8fa9e8" /></svg></ScrollButton>
        <ScrollButton aria-label="向右滚动"><Chevron dir={-90} /></ScrollButton>
      </HScroll>
      <StatusBar>
        <StatusButton $first>栅格</StatusButton>
        <StatusButton>正交</StatusButton>
        <StatusButton>极轴</StatusButton>
        <StatusButton $on>对象捕捉</StatusButton>
        <StatusButton $on>对象追踪</StatusButton>
        <StatusButton>线宽</StatusButton>
        <StatusButton $on>模型</StatusButton>
        <Tray>
          <svg width="34" height="16" viewBox="0 0 34 16" aria-label="通信中心">
            <path d="M.5 16V.5H19" stroke="#aca899" fill="none" />
            <path d="M3 2l7 7M5 12l3-5M4 14h6" stroke="#2c4f7b" strokeWidth="2" />
            <path d="M4 4c0 5 4 8 9 7z" fill="#9cc0e2" stroke="#2c4f7b" />
            <path d="M13 4l6 12H8z" fill="#fbe122" stroke="#a08c0c" strokeWidth=".8" />
            <path d="M13.500 8v5M13.500 14v2" stroke="#000" strokeWidth="1.500" />
            <path d="M28 10h6l-3 4z" fill="#000" />
          </svg>
        </Tray>
      </StatusBar>
      <StyleManager />
      <ModifyStyle />
    </Desktop>
  );
}
